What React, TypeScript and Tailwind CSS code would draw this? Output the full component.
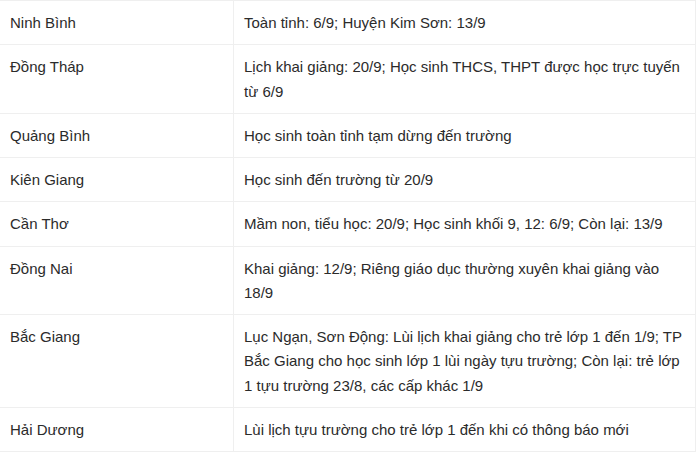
import React from "react";

const rows: [string, string][] = [
  ["Ninh Bình", "Toàn tỉnh: 6/9; Huyện Kim Sơn: 13/9"],
  ["Đồng Tháp", "Lịch khai giảng: 20/9; Học sinh THCS, THPT được học trực tuyến từ 6/9"],
  ["Quảng Bình", "Học sinh toàn tỉnh tạm dừng đến trường"],
  ["Kiên Giang", "Học sinh đến trường từ 20/9"],
  ["Cần Thơ", "Mầm non, tiểu học: 20/9; Học sinh khối 9, 12: 6/9; Còn lại: 13/9"],
  ["Đồng Nai", "Khai giảng: 12/9; Riêng giáo dục thường xuyên khai giảng vào 18/9"],
  [
    "Bắc Giang",
    "Lục Ngạn, Sơn Động: Lùi lịch khai giảng cho trẻ lớp 1 đến 1/9; TP Bắc Giang cho học sinh lớp 1 lùi ngày tựu trường; Còn lại: trẻ lớp 1 tựu trường 23/8, các cấp khác 1/9",
  ],
  ["Hải Dương", "Lùi lịch tựu trường cho trẻ lớp 1 đến khi có thông báo mới"],
];

const App = () => {
  return (
    <div className="w-[700px] h-[453px] overflow-hidden bg-white font-['Liberation_Sans',Arial,sans-serif] text-[15px] leading-[24.25px] text-[#2b2b2b]">
      {/* schedule table */}
      <table className="w-[697px] border-collapse -ml-px table-fixed">
        <colgroup>
          <col className="w-[234px]" />
          <col />
        </colgroup>
        <tbody>
          {rows.map(([province, note]) => (
            <tr key={province}>
              <td className="border border-[#efefef] pl-[10px] pr-[10px] pt-[10px] pb-[9px] align-top">{province}</td>
              <td className="border border-[#efefef] pl-[10px] pr-[10px] pt-[10px] pb-[9px] align-top">{note}</td>
            </tr>
          ))}
        </tbody>
      </table>
    </div>
  );
};

export default App;
